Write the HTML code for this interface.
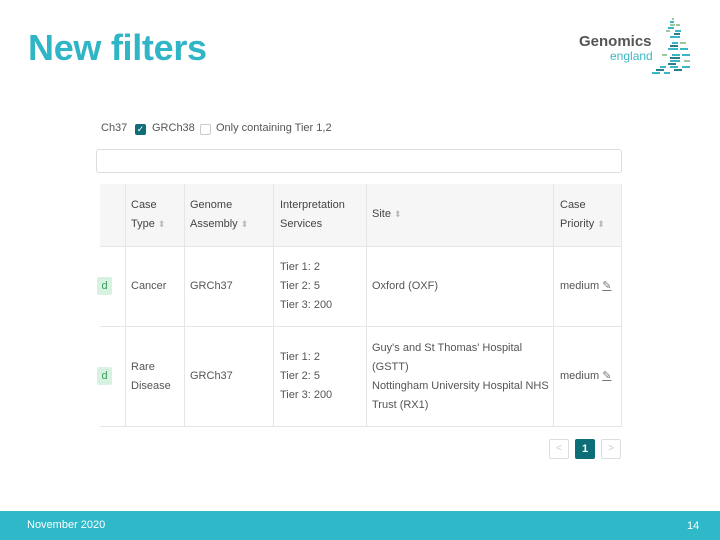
<!DOCTYPE html>
<html><head><style>
*{margin:0;padding:0;box-sizing:border-box}
body{width:720px;height:540px;position:relative;background:#fff;font-family:"Liberation Sans",sans-serif;overflow:hidden}
.a{position:absolute}
.t{font-size:11px;color:#555;line-height:19px}
.h{font-size:11px;color:#444;line-height:19px}
.s{color:#bbb;font-size:9px}
</style></head><body>
<div class="a" style="left:28px;top:27px;font-size:36px;font-weight:bold;color:#2fb5c5;letter-spacing:-0.3px">New filters</div>
<div class="a" style="left:579px;top:33px;font-size:15px;font-weight:bold;color:#555">Genomics</div>
<div class="a" style="left:610px;top:49px;font-size:12px;color:#3bb6c6">england</div>
<svg class="a" style="left:640px;top:16px" width="60" height="62">
<g fill="#9cc8a0"><rect x="32" y="2" width="2" height="2"/><rect x="30" y="8" width="5" height="2"/><rect x="36" y="8" width="4" height="2"/><rect x="26" y="14" width="4" height="2"/><rect x="40" y="26" width="6" height="2"/><rect x="22" y="38" width="5" height="2"/><rect x="44" y="44" width="6" height="2"/></g>
<g fill="#3bb6c6"><rect x="30" y="5" width="4" height="2"/><rect x="28" y="11" width="6" height="2"/><rect x="35" y="14" width="6" height="2"/><rect x="30" y="20" width="10" height="2"/><rect x="32" y="26" width="6" height="2"/><rect x="28" y="32" width="10" height="2"/><rect x="40" y="32" width="8" height="2"/><rect x="32" y="38" width="8" height="2"/><rect x="42" y="38" width="8" height="2"/><rect x="30" y="44" width="10" height="2"/><rect x="20" y="50" width="6" height="2"/><rect x="30" y="50" width="8" height="2"/><rect x="42" y="50" width="8" height="2"/><rect x="12" y="56" width="8" height="2"/><rect x="24" y="56" width="6" height="2"/></g>
<g fill="#2a7f8a"><rect x="34" y="17" width="6" height="2"/><rect x="30" y="29" width="8" height="2"/><rect x="30" y="41" width="10" height="2"/><rect x="28" y="47" width="8" height="2"/><rect x="16" y="53" width="8" height="2"/><rect x="34" y="53" width="8" height="2"/></g>
</svg>
<div class="a t" style="left:101px;top:119px">Ch37</div>
<div class="a" style="left:135px;top:124px;width:11px;height:11px;background:#0e6e78;border-radius:2px;color:#fff;font-size:9px;line-height:11px;text-align:center">✓</div>
<div class="a t" style="left:152px;top:119px">GRCh38</div>
<div class="a" style="left:200px;top:124px;width:11px;height:11px;border:1px solid #ccc;border-radius:2px"></div>
<div class="a t" style="left:216px;top:119px">Only containing Tier 1,2</div>
<div class="a" style="left:96px;top:149px;width:526px;height:24px;border:1px solid #ddd;border-radius:3px"></div>
<div class="a" style="left:100px;top:184px;width:522px;height:62px;background:#f6f6f6"></div>
<div class="a" style="left:100px;top:246px;width:522px;border-top:1px solid #e6e6e6"></div>
<div class="a" style="left:100px;top:326px;width:522px;border-top:1px solid #e6e6e6"></div>
<div class="a" style="left:100px;top:426px;width:522px;border-top:1px solid #e6e6e6"></div>
<div class="a" style="left:621px;top:184px;height:242px;border-left:1px solid #e6e6e6"></div>
<div class="a" style="left:125px;top:184px;height:242px;border-left:1px solid #e6e6e6"></div>
<div class="a" style="left:184px;top:184px;height:242px;border-left:1px solid #e6e6e6"></div>
<div class="a" style="left:273px;top:184px;height:242px;border-left:1px solid #e6e6e6"></div>
<div class="a" style="left:366px;top:184px;height:242px;border-left:1px solid #e6e6e6"></div>
<div class="a" style="left:553px;top:184px;height:242px;border-left:1px solid #e6e6e6"></div>
<div class="a h" style="left:131px;top:196px">Case<br>Type <span class="s">⬍</span></div>
<div class="a h" style="left:190px;top:196px">Genome<br>Assembly <span class="s">⬍</span></div>
<div class="a h" style="left:280px;top:196px">Interpretation<br>Services</div>
<div class="a h" style="left:372px;top:205px">Site <span class="s">⬍</span></div>
<div class="a h" style="left:560px;top:196px">Case<br>Priority <span class="s">⬍</span></div>
<div class="a" style="left:97px;top:277px;width:15px;height:18px;background:#d8f2e2;color:#3a9a5c;font-size:11px;line-height:18px;text-align:center;border-radius:2px">d</div>
<div class="a t" style="left:131px;top:277px">Cancer</div>
<div class="a t" style="left:190px;top:277px">GRCh37</div>
<div class="a t" style="left:280px;top:258px">Tier 1: 2<br>Tier 2: 5<br>Tier 3: 200</div>
<div class="a t" style="left:372px;top:277px">Oxford (OXF)</div>
<div class="a t" style="left:560px;top:277px">medium <span style="color:#777;text-decoration:underline">✎</span></div>
<div class="a" style="left:97px;top:367px;width:15px;height:18px;background:#d8f2e2;color:#3a9a5c;font-size:11px;line-height:18px;text-align:center;border-radius:2px">d</div>
<div class="a t" style="left:131px;top:358px">Rare<br>Disease</div>
<div class="a t" style="left:190px;top:367px">GRCh37</div>
<div class="a t" style="left:280px;top:348px">Tier 1: 2<br>Tier 2: 5<br>Tier 3: 200</div>
<div class="a t" style="left:372px;top:339px">Guy's and St Thomas' Hospital<br>(GSTT)<br>Nottingham University Hospital NHS<br>Trust (RX1)</div>
<div class="a t" style="left:560px;top:367px">medium <span style="color:#777;text-decoration:underline">✎</span></div>
<div class="a" style="left:549px;top:439px;width:20px;height:20px;border:1px solid #ddd;border-radius:2px;color:#ccc;font-size:10px;text-align:center;line-height:18px">&lt;</div>
<div class="a" style="left:575px;top:439px;width:20px;height:20px;background:#0e6e78;border-radius:2px;color:#fff;font-size:11px;font-weight:bold;text-align:center;line-height:20px">1</div>
<div class="a" style="left:601px;top:439px;width:20px;height:20px;border:1px solid #ddd;border-radius:2px;color:#ccc;font-size:10px;text-align:center;line-height:18px">&gt;</div>
<div class="a" style="left:0;top:511px;width:720px;height:29px;background:#2fb8c8"></div>
<div class="a" style="left:27px;top:519px;font-size:11px;color:#fff">November 2020</div>
<div class="a" style="left:687px;top:520px;font-size:11px;color:#fff">14</div>
</body></html>
